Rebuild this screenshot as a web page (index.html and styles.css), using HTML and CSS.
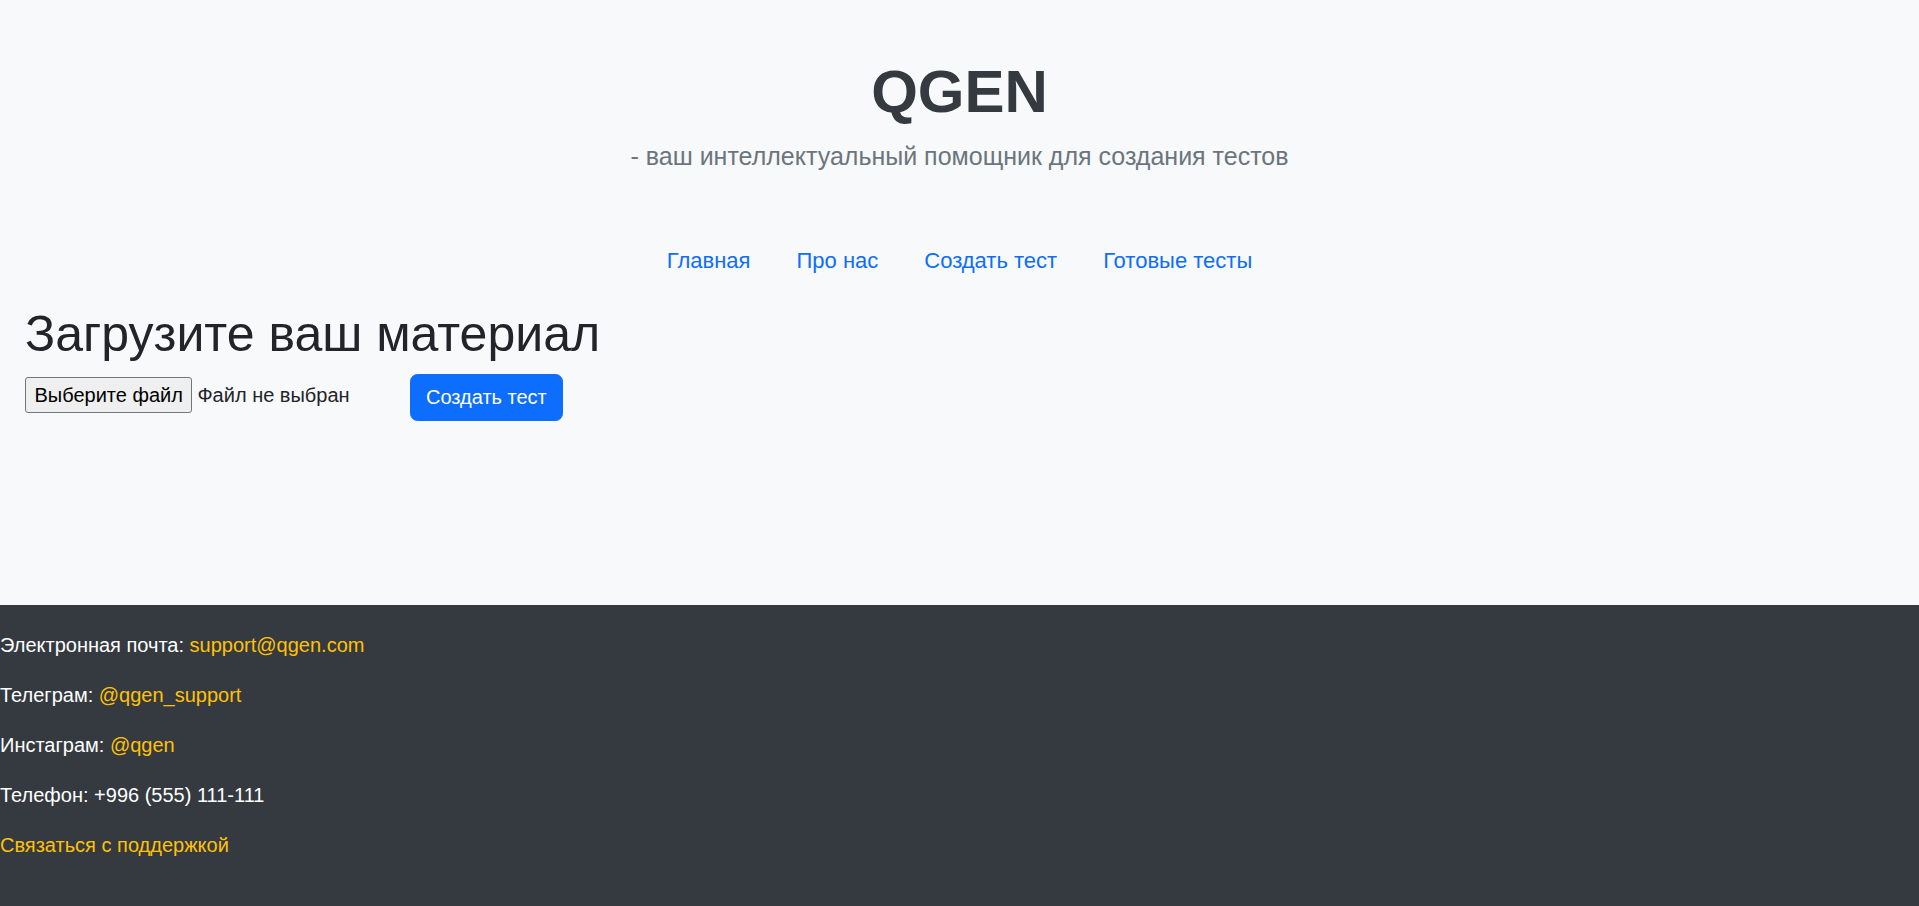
FILE: index.html
```html
<!DOCTYPE html>
<html lang="ru">
<head>
<meta charset="utf-8">
<title>QGEN</title>
<link rel="stylesheet" href="styles.css">
</head>
<body>
<header class="hero">
  <h1 class="brand">QGEN</h1>
  <p class="lead">- ваш интеллектуальный помощник для создания тестов</p>
</header>
<nav class="nav">
  <a class="nav-link" href="#">Главная</a>
  <a class="nav-link" href="#">Про нас</a>
  <a class="nav-link" href="#">Создать тест</a>
  <a class="nav-link" href="#">Готовые тесты</a>
</nav>
<main class="main">
  <h2 class="title">Загрузите ваш материал</h2>
  <form class="upload">
    <label class="file">
      <span class="file-btn">Выберите файл</span>
      <span class="file-name">Файл не выбран</span>
    </label>
    <button type="button" class="btn">Создать тест</button>
  </form>
</main>
<footer class="footer">
  <p>Электронная почта: <a href="#">support@qgen.com</a></p>
  <p>Телеграм: <a href="#">@qgen_support</a></p>
  <p>Инстаграм: <a href="#">@qgen</a></p>
  <p>Телефон: +996 (555) 111-111</p>
  <p><a href="#">Связаться с поддержкой</a></p>
</footer>
</body>
</html>
```
FILE: styles.css
```css
* { box-sizing: border-box; }
html, body { height: 100%; }
body {
  margin: 0;
  background: #f8f9fa;
  font-family: "Liberation Sans", Arial, sans-serif;
  font-size: 20px;
  line-height: 1.5;
  color: #212529;
  display: flex;
  flex-direction: column;
}
.hero {
  text-align: center;
  padding-top: 56px;
}
.brand {
  margin: 0;
  font-size: 60px;
  line-height: 72px;
  font-weight: 700;
  color: #343a40;
}
.lead {
  margin: 10px 0 0;
  font-size: 25px;
  line-height: 37.5px;
  color: #6c757d;
}
.nav {
  display: flex;
  justify-content: center;
  margin-top: 60px;
}
.nav-link {
  padding: 10px 23px;
  font-size: 22px;
  line-height: 30px;
  color: #0d6efd;
  text-decoration: none;
}
.main {
  flex: 1;
  padding: 18px 25px 0;
}
.title {
  margin: 0 0 10px;
  font-size: 50px;
  line-height: 60px;
  font-weight: 500;
  color: #212529;
}
.upload {
  display: flex;
  align-items: flex-start;
}
.file {
  width: 385px;
  margin-top: 3px;
  display: flex;
  align-items: baseline;
  gap: 5px;
}
.file-btn {
  display: inline-block;
  padding: 2px 8.5px;
  line-height: 30px;
  border: 1px solid #767676;
  border-radius: 3px;
  background: #efefef;
  color: #000;
}
.file-name { color: #212529; }
.btn {
  font: inherit;
  font-size: 20px;
  line-height: 30px;
  padding: 7.5px 15px;
  border: 1px solid #0d6efd;
  border-radius: 7.5px;
  background: #0d6efd;
  color: #fff;
  cursor: pointer;
}
.footer {
  height: 301px;
  background: #343a40;
  color: #fff;
  padding: 25px 0 25px;
}
.footer p { margin: 0 0 20px; line-height: 30px; }
.footer a { color: #ffc107; text-decoration: none; }
```
